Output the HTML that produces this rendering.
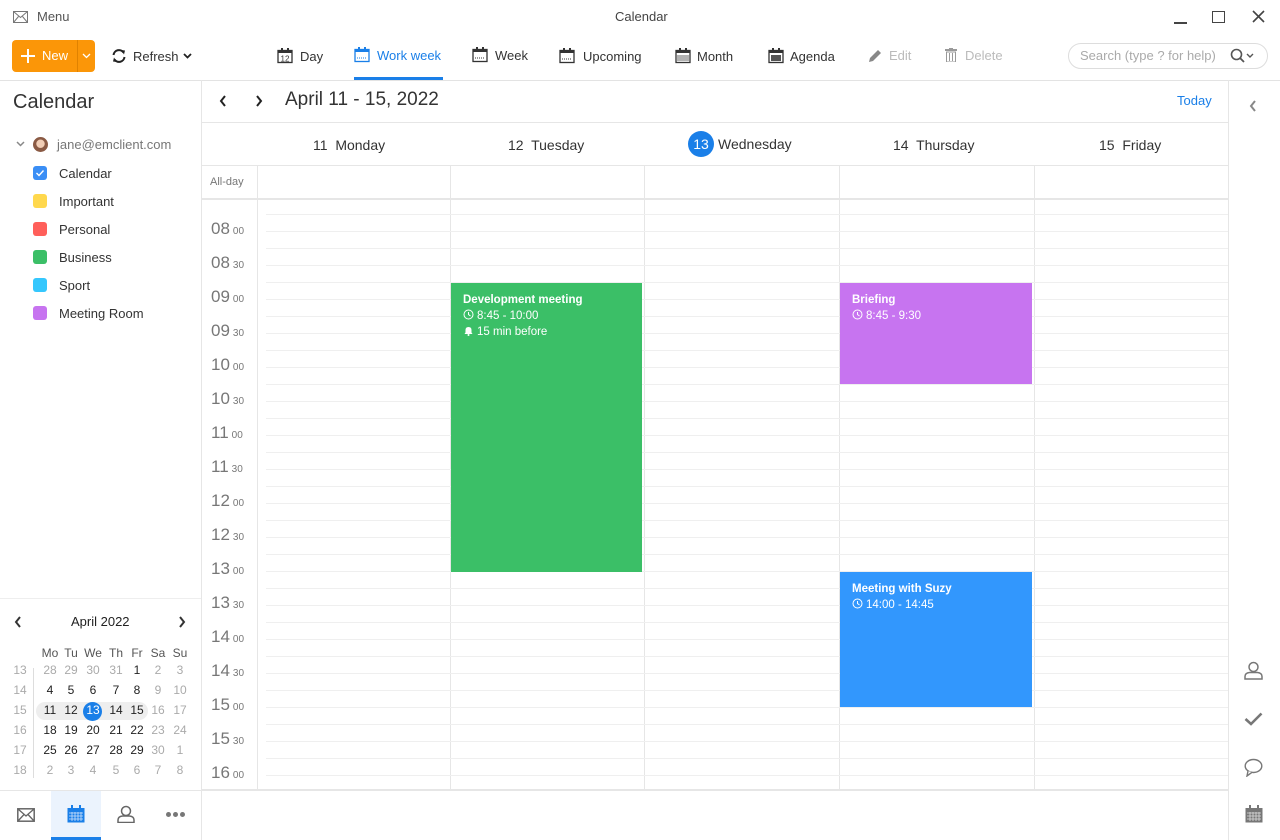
<!DOCTYPE html>
<html><head><meta charset="utf-8"><style>
*{margin:0;padding:0;box-sizing:border-box}
body{width:1280px;height:840px;position:relative;overflow:hidden;background:#fff;font-family:"Liberation Sans","DejaVu Sans",sans-serif;color:#333;font-size:13px}
.a{position:absolute}
.t{position:absolute;white-space:nowrap}
.hl{position:absolute;height:1px;background:#e6e6e6}
.vl{position:absolute;width:1px;background:#e6e6e6}
.tl{position:absolute;left:211px;color:#777;font-size:17px;white-space:nowrap}
.tl small{font-size:10px;margin-left:3px}
.mc{position:absolute;width:22px;text-align:center;font-size:12px;color:#222}
.g{color:#aaa}
.ev{position:absolute;color:#fff;font-size:11.5px;padding:9px 12px;line-height:16px}
.ev b{font-weight:bold;display:block}
.ev svg{vertical-align:-1px;margin-right:3px}
.sw{position:absolute;left:33px;width:14px;height:14px;border-radius:3px}
.ct{position:absolute;left:59px;font-size:13px;color:#333}
.tb{font-size:13px}
</style></head><body>
<!-- title bar -->
<svg class="a" style="left:13px;top:11px" width="15" height="12" viewBox="0 0 15 12"><rect x="0.5" y="0.5" width="14" height="11" fill="none" stroke="#777"/><path d="M0.5 0.5L7.5 6.5L14.5 0.5M0.5 11.5L5.5 5.5M14.5 11.5L9.5 5.5" fill="none" stroke="#777"/></svg>
<div class="t" style="left:37px;top:9px;color:#555">Menu</div>
<div class="t" style="left:615px;top:9px;color:#444">Calendar</div>
<div class="a" style="left:1174px;top:22px;width:13px;height:2px;background:#444"></div>
<div class="a" style="left:1212px;top:11px;width:13px;height:12px;border:1.5px solid #444"></div>
<svg class="a" style="left:1252px;top:10px" width="13" height="13"><path d="M1 1L12 12M12 1L1 12" stroke="#444" stroke-width="1.6"/></svg>
<!-- toolbar -->
<div class="a" style="left:12px;top:40px;width:83px;height:32px;background:#fb9608;border-radius:4px"></div>
<div class="a" style="left:77px;top:40px;width:1px;height:32px;background:#e08200"></div>
<svg class="a" style="left:20px;top:48px" width="16" height="16"><path d="M8 1V15M1 8H15" stroke="#fff" stroke-width="2"/></svg>
<div class="t" style="left:42px;top:48px;color:#fff;font-size:13px">New</div>
<svg class="a" style="left:82px;top:53px" width="9" height="6"><path d="M1 1L4.5 4.5L8 1" stroke="#fff" fill="none" stroke-width="1.3"/></svg>
<svg class="a" style="left:111px;top:48px" width="16" height="16" viewBox="0 0 16 16"><path d="M2.5 7A5.5 5.5 0 0 1 12.5 4.5M13.5 9A5.5 5.5 0 0 1 3.5 11.5" fill="none" stroke="#222" stroke-width="2"/><path d="M10 2L14 2.5L13 6.5Z M6 14L2 13.5L3 9.5Z" fill="#222"/></svg>
<div class="t tb" style="left:133px;top:49px;color:#333">Refresh</div>
<svg class="a" style="left:183px;top:53px" width="9" height="6"><path d="M1 1L4.5 4.5L8 1" stroke="#222" fill="none" stroke-width="1.8"/></svg>

<svg class="a" style="left:277px;top:48px" width="16" height="16"><rect x="1" y="2.5" width="14" height="12" fill="none" stroke="#333" stroke-width="1.3"/><rect x="1" y="2" width="14" height="3" fill="#333"/><rect x="4" y="0" width="2" height="4" fill="#333"/><rect x="10" y="0" width="2" height="4" fill="#333"/><text x="8" y="13.5" font-size="8" text-anchor="middle" fill="#333" font-family="Liberation Sans">12</text></svg>
<div class="t tb" style="left:300px;top:49px">Day</div>
<svg class="a" style="left:354px;top:47px" width="16" height="16"><rect x="1" y="2.5" width="14" height="12" fill="none" stroke="#1a7fe8" stroke-width="1.3"/><rect x="1" y="2" width="14" height="3" fill="#1a7fe8"/><rect x="4" y="0" width="2" height="4" fill="#1a7fe8"/><rect x="10" y="0" width="2" height="4" fill="#1a7fe8"/><path d="M3 11H13" stroke="#1a7fe8" stroke-dasharray="1 1"/></svg>
<div class="t tb" style="left:377px;top:48px;color:#1a7fe8">Work week</div>
<div class="a" style="left:354px;top:77px;width:89px;height:3px;background:#1a7fe8"></div>
<svg class="a" style="left:472px;top:47px" width="16" height="16"><rect x="1" y="2.5" width="14" height="12" fill="none" stroke="#333" stroke-width="1.3"/><rect x="1" y="2" width="14" height="3" fill="#333"/><rect x="4" y="0" width="2" height="4" fill="#333"/><rect x="10" y="0" width="2" height="4" fill="#333"/><path d="M3 11H13" stroke="#333" stroke-dasharray="1 1"/></svg>
<div class="t tb" style="left:495px;top:48px">Week</div>
<svg class="a" style="left:559px;top:48px" width="16" height="16"><rect x="1" y="2.5" width="14" height="12" fill="none" stroke="#333" stroke-width="1.3"/><rect x="1" y="2" width="14" height="3" fill="#333"/><rect x="4" y="0" width="2" height="4" fill="#333"/><rect x="10" y="0" width="2" height="4" fill="#333"/><path d="M3 11H13" stroke="#333" stroke-dasharray="1 1"/></svg>
<div class="t tb" style="left:583px;top:49px">Upcoming</div>
<svg class="a" style="left:675px;top:48px" width="16" height="16"><rect x="1" y="2.5" width="14" height="12" fill="none" stroke="#333" stroke-width="1.3"/><rect x="1" y="2" width="14" height="3" fill="#333"/><rect x="4" y="0" width="2" height="4" fill="#333"/><rect x="10" y="0" width="2" height="4" fill="#333"/><path d="M3 7V13M5 7V13M7 7V13M9 7V13M11 7V13M13 7V13" stroke="#666"/></svg>
<div class="t tb" style="left:697px;top:49px">Month</div>
<svg class="a" style="left:768px;top:48px" width="16" height="16"><rect x="1" y="2.5" width="14" height="12" fill="none" stroke="#333" stroke-width="1.3"/><rect x="1" y="2" width="14" height="3" fill="#333"/><rect x="4" y="0" width="2" height="4" fill="#333"/><rect x="10" y="0" width="2" height="4" fill="#333"/><rect x="3" y="7" width="10" height="6" fill="#555"/></svg>
<div class="t tb" style="left:790px;top:49px">Agenda</div>
<svg class="a" style="left:867px;top:48px" width="16" height="16"><path d="M2 14L3 10L11 2L14 5L6 13Z" fill="#888"/></svg>
<div class="t" style="left:889px;top:48px;font-size:13px;color:#bbb">Edit</div>
<svg class="a" style="left:945px;top:48px" width="12" height="14"><rect x="0" y="1" width="12" height="2" fill="#999"/><rect x="4" y="0" width="4" height="2" fill="#999"/><rect x="1.5" y="4" width="9" height="10" fill="none" stroke="#999"/><path d="M4.5 5V13M7.5 5V13" stroke="#999"/></svg>
<div class="t" style="left:965px;top:48px;font-size:13px;color:#bbb">Delete</div>
<div class="a" style="left:1068px;top:43px;width:200px;height:26px;border:1px solid #ddd;border-radius:13px"></div>
<div class="t" style="left:1080px;top:48px;font-size:13px;color:#aaa">Search (type ? for help)</div>
<svg class="a" style="left:1230px;top:48px" width="26" height="16"><circle cx="6.5" cy="6.5" r="5" fill="none" stroke="#555" stroke-width="1.6"/><path d="M10 10L14 14" stroke="#555" stroke-width="1.8"/><path d="M17 6L20 9L23 6" fill="none" stroke="#555" stroke-width="1.4"/></svg>
<div class="hl" style="left:0;top:80px;width:1280px;background:#e3e3e3"></div>

<!-- left pane -->
<div class="vl" style="left:201px;top:80px;height:760px"></div>
<div class="t" style="left:13px;top:91px;font-size:20px;color:#333">Calendar</div>
<svg class="a" style="left:16px;top:141px" width="9" height="6"><path d="M1 1L4.5 4.5L8 1" stroke="#888" fill="none" stroke-width="1.5"/></svg>
<div class="a" style="left:33px;top:137px;width:15px;height:15px;border-radius:50%;background:radial-gradient(circle at 50% 45%,#f1cdb5 0 35%,#8a5a44 40%)"></div>
<div class="t" style="left:57px;top:137px;color:#777">jane@emclient.com</div>
<div class="sw" style="top:166px;background:#3a8ef5"></div>
<svg class="a" style="left:35px;top:168px" width="10" height="10"><path d="M1.5 5L4 7.5L8.5 2.5" stroke="#fff" fill="none" stroke-width="1.4"/></svg>
<div class="ct" style="top:166px">Calendar</div>
<div class="sw" style="top:194px;background:#ffd84d"></div><div class="ct" style="top:194px">Important</div>
<div class="sw" style="top:222px;background:#ff5f5a"></div><div class="ct" style="top:222px">Personal</div>
<div class="sw" style="top:250px;background:#3bbf67"></div><div class="ct" style="top:250px">Business</div>
<div class="sw" style="top:278px;background:#35c7fd"></div><div class="ct" style="top:278px">Sport</div>
<div class="sw" style="top:306px;background:#c774f0"></div><div class="ct" style="top:306px">Meeting Room</div>

<div class="hl" style="left:0;top:598px;width:201px;background:#eee"></div>
<svg class="a" style="left:14px;top:616px" width="8" height="12"><path d="M6 1L2 6L6 11" stroke="#333" fill="none" stroke-width="2"/></svg>
<svg class="a" style="left:178px;top:616px" width="8" height="12"><path d="M2 1L6 6L2 11" stroke="#333" fill="none" stroke-width="2"/></svg>
<div class="t" style="left:71px;top:614px;font-size:13px;color:#222">April 2022</div>
<div class="vl" style="left:33px;top:668px;height:110px;background:#ddd"></div>
<div class="a" style="left:36px;top:702px;width:112px;height:18px;border-radius:9px;background:#eee"></div>
<div class="a" style="left:83px;top:702px;width:19px;height:19px;border-radius:50%;background:#1a7fe8"></div>

<div class="hl" style="left:0;top:790px;width:201px"></div>
<svg class="a" style="left:17px;top:808px" width="18" height="14"><rect x="0.8" y="0.8" width="16.4" height="12.4" fill="none" stroke="#666" stroke-width="1.5"/><path d="M1 1L9 8L17 1M1 13L7 6.5M17 13L11 6.5" fill="none" stroke="#666" stroke-width="1.3"/></svg>
<div class="a" style="left:51px;top:791px;width:50px;height:49px;background:#ebf3fd"></div>
<div class="a" style="left:51px;top:837px;width:50px;height:3px;background:#1a7fe8"></div>
<svg class="a" style="left:67px;top:805px" width="18" height="18"><rect x="0.5" y="3" width="17" height="14.5" fill="#1a7fe8"/><rect x="4" y="0" width="2" height="4" fill="#1a7fe8"/><rect x="12" y="0" width="2" height="4" fill="#1a7fe8"/><path d="M2 8H16M2 11H16M2 14H16M5 7V16M8 7V16M11 7V16M14 7V16" stroke="#cfe3fb" stroke-width="0.8"/></svg>
<svg class="a" style="left:117px;top:805px" width="18" height="18"><circle cx="9" cy="6" r="4.5" fill="none" stroke="#666" stroke-width="1.5"/><path d="M1 17.5V15Q1 11.5 5.5 11H12.5Q17 11.5 17 15V17.5Z" fill="none" stroke="#666" stroke-width="1.5"/></svg>
<div class="a" style="left:166px;top:812px;width:5px;height:5px;border-radius:50%;background:#777"></div>
<div class="a" style="left:173px;top:812px;width:5px;height:5px;border-radius:50%;background:#777"></div>
<div class="a" style="left:180px;top:812px;width:5px;height:5px;border-radius:50%;background:#777"></div>

<!-- main header -->
<svg class="a" style="left:219px;top:95px" width="8" height="12"><path d="M6 1L2 6L6 11" stroke="#222" fill="none" stroke-width="2"/></svg>
<svg class="a" style="left:255px;top:95px" width="8" height="12"><path d="M2 1L6 6L2 11" stroke="#222" fill="none" stroke-width="2"/></svg>
<div class="t" style="left:285px;top:89px;font-size:19px;color:#333">April 11 - 15, 2022</div>
<div class="t" style="left:1177px;top:93px;font-size:13px;color:#1a7fe8">Today</div>
<div class="hl" style="left:202px;top:122px;width:1026px"></div>
<div class="t" style="left:313px;top:137px;font-size:14px">11&nbsp; Monday</div>
<div class="t" style="left:508px;top:137px;font-size:14px">12&nbsp; Tuesday</div>
<div class="a" style="left:688px;top:131px;width:26px;height:26px;border-radius:50%;background:#1a7fe8;color:#fff;font-size:14px;text-align:center;line-height:26px">13</div>
<div class="t" style="left:718px;top:136px;font-size:14px">Wednesday</div>
<div class="t" style="left:893px;top:137px;font-size:14px">14&nbsp; Thursday</div>
<div class="t" style="left:1099px;top:137px;font-size:14px">15&nbsp; Friday</div>
<div class="hl" style="left:202px;top:165px;width:1026px"></div>
<div class="t" style="left:210px;top:176px;font-size:11px;color:#777">All-day</div>
<div class="hl" style="left:202px;top:198px;width:1026px;height:2px"></div>
<div class="vl" style="left:257px;top:166px;height:623px"></div>
<div class="vl" style="left:450px;top:166px;height:623px"></div>
<div class="vl" style="left:644px;top:166px;height:623px"></div>
<div class="vl" style="left:839px;top:166px;height:623px"></div>
<div class="vl" style="left:1034px;top:166px;height:623px"></div>
<div class="a" style="left:266px;top:214px;width:962px;height:575px;background:repeating-linear-gradient(to bottom,#efefef 0 1px,transparent 1px 17px)"></div>
<div class="hl" style="left:202px;top:789px;width:1026px;height:2px"></div>

<div class="tl" style="top:219px">08<small>00</small></div>
<div class="tl" style="top:253px">08<small>30</small></div>
<div class="tl" style="top:287px">09<small>00</small></div>
<div class="tl" style="top:321px">09<small>30</small></div>
<div class="tl" style="top:355px">10<small>00</small></div>
<div class="tl" style="top:389px">10<small>30</small></div>
<div class="tl" style="top:423px">11<small>00</small></div>
<div class="tl" style="top:457px">11<small>30</small></div>
<div class="tl" style="top:491px">12<small>00</small></div>
<div class="tl" style="top:525px">12<small>30</small></div>
<div class="tl" style="top:559px">13<small>00</small></div>
<div class="tl" style="top:593px">13<small>30</small></div>
<div class="tl" style="top:627px">14<small>00</small></div>
<div class="tl" style="top:661px">14<small>30</small></div>
<div class="tl" style="top:695px">15<small>00</small></div>
<div class="tl" style="top:729px">15<small>30</small></div>
<div class="tl" style="top:763px">16<small>00</small></div>

<div class="ev" style="left:451px;top:283px;width:191px;height:289px;background:#3bbf67"><b>Development meeting</b><svg width="11" height="11"><circle cx="5.5" cy="5.5" r="4.5" fill="none" stroke="#fff"/><path d="M5.5 3V5.5L7.5 7" stroke="#fff" fill="none"/></svg>8:45 - 10:00<br><svg width="11" height="11"><path d="M1.5 9H9.5L8.5 7.5V5Q8.5 2 5.5 2Q2.5 2 2.5 5V7.5Z" fill="#fff"/><circle cx="5.5" cy="10" r="1" fill="#fff"/></svg>15 min before</div>
<div class="ev" style="left:840px;top:283px;width:192px;height:101px;background:#c774f0"><b>Briefing</b><svg width="11" height="11"><circle cx="5.5" cy="5.5" r="4.5" fill="none" stroke="#fff"/><path d="M5.5 3V5.5L7.5 7" stroke="#fff" fill="none"/></svg>8:45 - 9:30</div>
<div class="ev" style="left:840px;top:572px;width:192px;height:135px;background:#3297fd"><b>Meeting with Suzy</b><svg width="11" height="11"><circle cx="5.5" cy="5.5" r="4.5" fill="none" stroke="#fff"/><path d="M5.5 3V5.5L7.5 7" stroke="#fff" fill="none"/></svg>14:00 - 14:45</div>

<!-- right sidebar -->
<div class="vl" style="left:1228px;top:80px;height:760px"></div>
<svg class="a" style="left:1249px;top:100px" width="8" height="12"><path d="M6 1L2 6L6 11" stroke="#888" fill="none" stroke-width="2"/></svg>
<svg class="a" style="left:1244px;top:661px" width="19" height="19"><circle cx="9.5" cy="6" r="4.5" fill="none" stroke="#777" stroke-width="1.5"/><path d="M1 18V15.5Q1 12 5.5 11.5H13.5Q18 12 18 15.5V18Z" fill="none" stroke="#777" stroke-width="1.5"/></svg>
<svg class="a" style="left:1244px;top:712px" width="19" height="14"><path d="M1.5 7L7 12L17.5 1.5" fill="none" stroke="#777" stroke-width="2.6"/></svg>
<svg class="a" style="left:1244px;top:758px" width="19" height="19"><ellipse cx="9.5" cy="8" rx="8.3" ry="6.5" fill="none" stroke="#777" stroke-width="1.4"/><path d="M4 13L3 18L8 14.3" fill="#fff" stroke="#777" stroke-width="1.4"/></svg>
<svg class="a" style="left:1245px;top:805px" width="18" height="18"><rect x="0.5" y="3" width="17" height="14.5" fill="#777"/><rect x="4" y="0" width="2" height="4" fill="#777"/><rect x="12" y="0" width="2" height="4" fill="#777"/><path d="M2 8H16M2 11H16M2 14H16M5 7V16M8 7V16M11 7V16M14 7V16" stroke="#ddd" stroke-width="0.8"/></svg>

<div class="mc" style="left:39px;top:646px;color:#555">Mo</div><div class="mc" style="left:60px;top:646px;color:#555">Tu</div><div class="mc" style="left:82px;top:646px;color:#555">We</div><div class="mc" style="left:105px;top:646px;color:#555">Th</div><div class="mc" style="left:126px;top:646px;color:#555">Fr</div><div class="mc" style="left:147px;top:646px;color:#555">Sa</div><div class="mc" style="left:169px;top:646px;color:#555">Su</div>

<div class="mc g" style="left:9px;top:663px">13</div><div class="mc g" style="left:39px;top:663px">28</div><div class="mc g" style="left:60px;top:663px">29</div><div class="mc g" style="left:82px;top:663px">30</div><div class="mc g" style="left:105px;top:663px">31</div><div class="mc" style="left:126px;top:663px">1</div><div class="mc g" style="left:147px;top:663px">2</div><div class="mc g" style="left:169px;top:663px">3</div>
<div class="mc g" style="left:9px;top:683px">14</div><div class="mc" style="left:39px;top:683px">4</div><div class="mc" style="left:60px;top:683px">5</div><div class="mc" style="left:82px;top:683px">6</div><div class="mc" style="left:105px;top:683px">7</div><div class="mc" style="left:126px;top:683px">8</div><div class="mc g" style="left:147px;top:683px">9</div><div class="mc g" style="left:169px;top:683px">10</div>
<div class="mc g" style="left:9px;top:703px">15</div><div class="mc" style="left:39px;top:703px">11</div><div class="mc" style="left:60px;top:703px">12</div><div class="mc" style="left:82px;top:703px;color:#fff">13</div><div class="mc" style="left:105px;top:703px">14</div><div class="mc" style="left:126px;top:703px">15</div><div class="mc g" style="left:147px;top:703px">16</div><div class="mc g" style="left:169px;top:703px">17</div>
<div class="mc g" style="left:9px;top:723px">16</div><div class="mc" style="left:39px;top:723px">18</div><div class="mc" style="left:60px;top:723px">19</div><div class="mc" style="left:82px;top:723px">20</div><div class="mc" style="left:105px;top:723px">21</div><div class="mc" style="left:126px;top:723px">22</div><div class="mc g" style="left:147px;top:723px">23</div><div class="mc g" style="left:169px;top:723px">24</div>
<div class="mc g" style="left:9px;top:743px">17</div><div class="mc" style="left:39px;top:743px">25</div><div class="mc" style="left:60px;top:743px">26</div><div class="mc" style="left:82px;top:743px">27</div><div class="mc" style="left:105px;top:743px">28</div><div class="mc" style="left:126px;top:743px">29</div><div class="mc g" style="left:147px;top:743px">30</div><div class="mc g" style="left:169px;top:743px">1</div>
<div class="mc g" style="left:9px;top:763px">18</div><div class="mc g" style="left:39px;top:763px">2</div><div class="mc g" style="left:60px;top:763px">3</div><div class="mc g" style="left:82px;top:763px">4</div><div class="mc g" style="left:105px;top:763px">5</div><div class="mc g" style="left:126px;top:763px">6</div><div class="mc g" style="left:147px;top:763px">7</div><div class="mc g" style="left:169px;top:763px">8</div>
</body></html>
